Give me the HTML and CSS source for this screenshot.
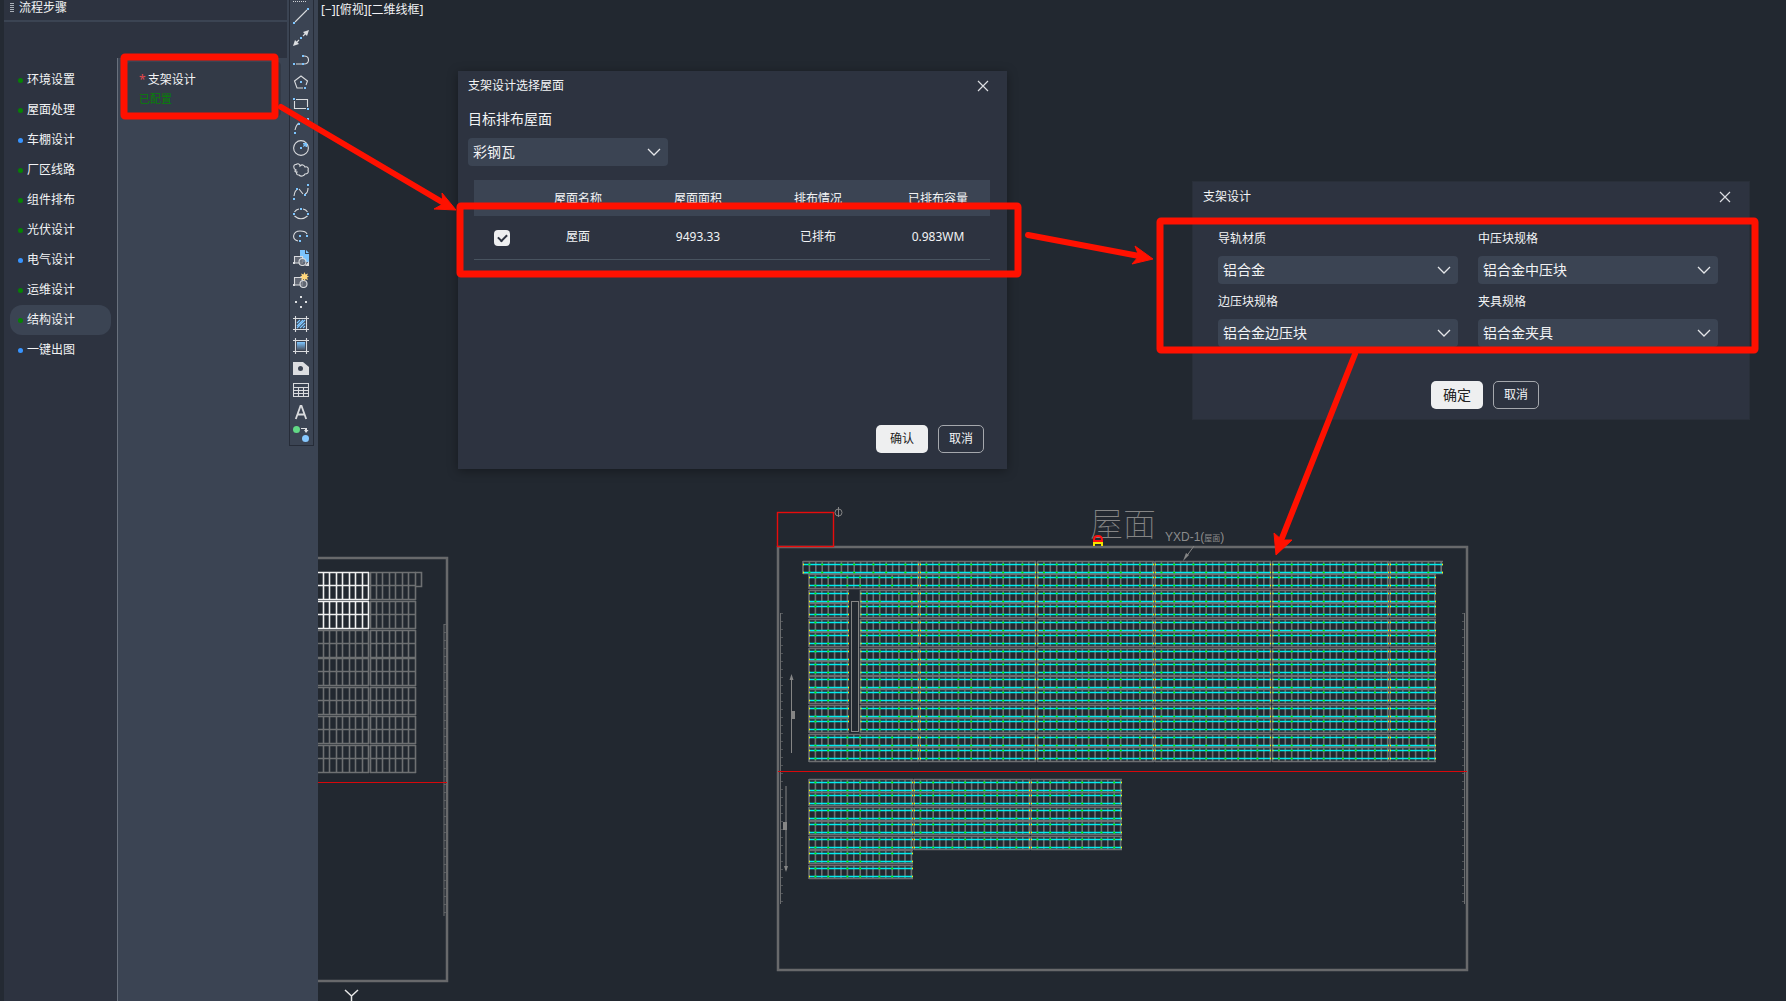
FILE: index.html
```html
<!DOCTYPE html>
<html lang="zh-CN">
<head>
<meta charset="utf-8">
<meta name="viewport" content="width=device-width, initial-scale=1">
<title>流程步骤 - 支架设计</title>
<link rel="stylesheet" href="styles.css">
</head>
<body>
<svg class="defs" aria-hidden="true">
  <symbol id="chevron" viewBox="0 0 14 10"><path d="M1 2l6 6 6-6" fill="none" stroke="#e4e6e9" stroke-width="1.3"/></symbol>
  <symbol id="close" viewBox="0 0 12 12"><path d="M1 1l10 10M11 1L1 11" fill="none" stroke="#dcdee2" stroke-width="1.2"/></symbol>
</svg>
<div class="app">
  <aside class="sidebar">
    <div class="workflow">
      <header class="workflow-head">
        <span class="grip"></span>
        <h1 class="workflow-title">流程步骤</h1>
      </header>
      <div class="workflow-body">
        <nav class="steps">
          <button class="step done">环境设置</button>
          <button class="step done">屋面处理</button>
          <button class="step">车棚设计</button>
          <button class="step done">厂区线路</button>
          <button class="step done">组件排布</button>
          <button class="step done">光伏设计</button>
          <button class="step">电气设计</button>
          <button class="step done">运维设计</button>
          <button class="step done active">结构设计</button>
          <button class="step">一键出图</button>
        </nav>
        <section class="tasks">
          <button class="task">
            <span class="task-name"><span class="required">*</span>支架设计</span>
            <span class="task-state">已配置</span>
          </button>
        </section>
      </div>
    </div>
    <div class="dock">
      <div class="toolbar">
        <button class="tool" aria-label="直线"><svg viewBox="0 0 16 16"><path d="M2 14L14 2" class="l"/><path class="b" d="M0 14h2v2H0zM14 0h2v2h-2z"/></svg></button>
        <button class="tool" aria-label="构造线"><svg viewBox="0 0 16 16"><path d="M3 13l3-3M10 6l3-3" class="l"/><path class="w" d="M16 0l-2 6-4-4zM0 16l2-6 4 4z"/><path class="b" d="M7 7h2v2H7z"/></svg></button>
        <button class="tool" aria-label="多段线"><svg viewBox="0 0 16 16"><path d="M3 12h6M11 4c6 0 6 8 0 8" class="l"/><path class="b" d="M0 11h2v2H0zM9 3h2v2H9zM9 11h2v2H9z"/></svg></button>
        <button class="tool" aria-label="多边形"><svg viewBox="0 0 16 16"><path d="M10 14H4L1.500 7 8 2l6.500 5L13 11" class="l"/><path class="b" d="M7 7h2v2H7zM11 13h2v2h-2z"/></svg></button>
        <button class="tool" aria-label="矩形"><svg viewBox="0 0 16 16"><path d="M3 3.500h11.500V11M13 12.500H1.500V5" class="l"/><path class="b" d="M0 2h2v2H0zM14 12h2v2h-2z"/></svg></button>
        <button class="tool" aria-label="圆弧"><svg viewBox="0 0 16 16"><path d="M2 12q1-5 4-7M9 3l4-2" class="l"/><path class="b" d="M1 14h2v2H1zM5 5h2v2H5zM14 0h2v2h-2z"/></svg></button>
        <button class="tool" aria-label="圆"><svg viewBox="0 0 16 16"><circle cx="8" cy="8" r="7.400" class="l"/><path class="b" d="M7 7h2v2H7zM10 3h4v4h-1.500V5.500L10.500 7 10 6l1.500-1.500H10z"/></svg></button>
        <button class="tool" aria-label="修订云线"><svg viewBox="0 0 16 16"><path d="M3 8C0 7 0 2 3 2.500 5 1 7 2 7 4c2-2 4-1 5 1 2-1 4 1 3 3 1 3-1 4-3 4-1 2-4 3-6 1-2 0-3-1-2-3-2 0-3-1-1-2z" class="l"/></svg></button>
        <button class="tool" aria-label="样条曲线"><svg viewBox="0 0 16 16"><path d="M1 12q1-6 3-6M6 5l4 5M12 10q3-1 3-6" class="l"/><path class="b" d="M0 14h2v2H0zM3 4h2v2H3zM11 10h2v2h-2zM14 0h2v2h-2z"/></svg></button>
        <button class="tool" aria-label="椭圆"><svg viewBox="0 0 16 16"><path d="M1.500 6Q3 3.500 6 3M10 3q3 .5 4.500 3M1.500 10Q8 15.500 14.500 10" class="l"/><path class="b" d="M7 2h2v2H7zM0 7h2v2H0zM14 7h2v2h-2z"/></svg></button>
        <button class="tool" aria-label="椭圆弧"><svg viewBox="0 0 16 16"><path d="M5 13C-2 11 0 3 7 3q6 0 7 3" class="l"/><path class="b" d="M6 7h2v2H6zM13 7h2v2h-2zM6 12h2v2H6z"/></svg></button>
        <button class="tool" aria-label="插入块"><svg viewBox="0 0 16 16"><path class="b" d="M7 0h5v4h4v8H7z"/><path d="M13 0l3 3h-3z" class="b"/><path d="M1.500 13V6.500h8V13z" class="l g"/><circle cx="9.500" cy="12" r="3.500" class="l g"/><path class="w" d="M0 12h2v2H0zM16 11v5h-4z"/></svg></button>
        <button class="tool" aria-label="创建块"><svg viewBox="0 0 16 16"><path d="M1.500 13V5.500h8V13z" class="l g"/><circle cx="10.500" cy="12" r="3.500" class="l g"/><path class="w" d="M0 12h2v2H0z"/><path d="M11.500 0l1 2.500L15 1.500l-1 2.300 2 .7-2 1 1 2.500-2.500-1-1 2-1-2-2.500 1 1-2.500-2-1 2-.7-1-2.300 2.500 1z" fill="#ffd67a"/></svg></button>
        <button class="tool" aria-label="点"><svg viewBox="0 0 16 16"><path class="w" d="M7 2h2v2H7zM2 7h2v2H2zM12 7h2v2h-2zM7 12h2v2H7z"/></svg></button>
        <button class="tool" aria-label="图案填充"><svg viewBox="0 0 16 16"><path d="M0 2.500h16M0 13.500h16M2.500 0v16M13.500 0v16" class="l"/><path d="M4 7l3-3M4 10l6-6M4 12l8-8M7 12l5-5M10 12l2-2" stroke="#7cc5ff" fill="none" stroke-width="1.200"/></svg></button>
        <button class="tool" aria-label="渐变色"><svg viewBox="0 0 16 16"><linearGradient id="fade" x2="0" y2="1"><stop stop-color="#7cc5ff"/><stop offset="1" stop-color="#4a5363"/></linearGradient><path fill="url(#fade)" d="M4 4h8v8H4z"/><path d="M0 2.500h16M0 13.500h16M2.500 0v16M13.500 0v16" class="l"/></svg></button>
        <button class="tool" aria-label="面域"><svg viewBox="0 0 16 16"><path class="w" fill-rule="evenodd" d="M0 2h10l6 5v8H0zM7.500 6a2.500 2.500 0 100 5 2.500 2.500 0 000-5z"/></svg></button>
        <button class="tool" aria-label="表格"><svg viewBox="0 0 16 16"><path d="M.5 1.500h15v13H.5zM0 5.500h16M0 8.500h16M0 11.500h16M5.500 5v9M10.500 5v9" class="l"/></svg></button>
        <button class="tool" aria-label="多行文字"><svg viewBox="0 0 16 16"><path d="M2.800 15L7.500 2h1l4.700 13M4.500 10.500h7" class="l t"/></svg></button>
        <button class="tool" aria-label="添加选定对象"><svg viewBox="0 0 16 16"><circle cx="3.500" cy="3.500" r="3.500" fill="#62d986"/><circle cx="12.500" cy="12.500" r="3.500" fill="#86c8ff"/><path class="w" d="M8 2h6v2h1.500L13 7l-2-3h1V3H8z"/></svg></button>
      </div>
    </div>
  </aside>

  <main class="canvas">
    <svg class="drawing" id="drawing" aria-hidden="true">
      <g transform="translate(-318 0)">
        <g id="arrays"></g>
        <g class="frame">
          <path d="M318 558H447V981H318"/>
          <rect x="778" y="547" width="689" height="423"/>
        </g>
        <g class="ruler">
          <path d="M444 624V916M780.500 613V904M1464.500 613V904"/>
          <path class="ticks" d="M445 624V916M782 613V904M1463 613V904"/>
        </g>
        <path class="axis" d="M318 782.500H447M778 771.500H1467"/>
        <rect class="axis corner" x="777.500" y="512.500" width="56" height="34"/>
        <g class="mark">
          <circle cx="838.500" cy="512.500" r="3.500"/><path d="M838.500 507v10"/>
          <rect x="851.500" y="601.500" width="7" height="130"/>
          <path d="M791.500 677v76M786 786v84"/>
          <path class="solid" d="M791.500 674l2 6h-4zM792 711h3v8h-3zM783 822h4v8h-4zM786 872l-2-6h4z"/>
          <path d="M1194 546l-8 11"/><path class="solid" d="M1183 561l3-8 3 2z"/>
        </g>
        <text class="roof-name" x="1090" y="536">屋面</text>
        <path d="M1094 541v-1q0-4 4-4t4 4v1M1093 541h10" fill="none" stroke="#f11" stroke-width="2"/>
        <path d="M1094 546v-3h8v3" fill="none" stroke="#f4e500" stroke-width="2"/>
        <text class="roof-code" x="1165" y="541">YXD-1(<tspan class="roof-small">屋面</tspan>)</text>
        <path d="M345 990l6.500 6 6.500-6M351.500 996v8" fill="none" stroke="#e6e6e6" stroke-width="1.500"/>
      </g>
    </svg>
    <div class="view-label">[−][俯视][二维线框]</div>

    <section class="dialog roof-dialog" aria-labelledby="roof-title">
      <header class="dialog-head">
        <h2 class="dialog-title" id="roof-title">支架设计选择屋面</h2>
        <button class="close" aria-label="关闭"><svg><use href="#close"/></svg></button>
      </header>
      <div class="roof-body">
        <label class="roof-label" for="roof-kind">目标排布屋面</label>
        <span class="select roof-select"><select id="roof-kind"><option>彩钢瓦</option></select><svg><use href="#chevron"/></svg></span>
        <div class="table-wrap">
          <table class="roofs">
            <thead><tr><th class="pick"></th><th>屋面名称</th><th>屋面面积</th><th>排布情况</th><th>已排布容量</th></tr></thead>
            <tbody><tr><td class="pick"><input class="check" type="checkbox" checked aria-label="选择屋面"></td><td>屋面</td><td>9493.33</td><td>已排布</td><td>0.983WM</td></tr></tbody>
          </table>
        </div>
      </div>
      <footer class="actions end">
        <button class="btn primary">确认</button>
        <button class="btn">取消</button>
      </footer>
    </section>

    <section class="dialog bracket-dialog" aria-labelledby="bracket-title">
      <header class="dialog-head">
        <h2 class="dialog-title" id="bracket-title">支架设计</h2>
        <button class="close" aria-label="关闭"><svg><use href="#close"/></svg></button>
      </header>
      <div class="fields">
        <div class="field"><label for="rail">导轨材质</label><span class="select"><select id="rail"><option>铝合金</option></select><svg><use href="#chevron"/></svg></span></div>
        <div class="field"><label for="mid">中压块规格</label><span class="select"><select id="mid"><option>铝合金中压块</option></select><svg><use href="#chevron"/></svg></span></div>
        <div class="field"><label for="edge">边压块规格</label><span class="select"><select id="edge"><option>铝合金边压块</option></select><svg><use href="#chevron"/></svg></span></div>
        <div class="field"><label for="clamp">夹具规格</label><span class="select"><select id="clamp"><option>铝合金夹具</option></select><svg><use href="#chevron"/></svg></span></div>
      </div>
      <footer class="actions center">
        <button class="btn primary large">确定</button>
        <button class="btn">取消</button>
      </footer>
    </section>
  </main>

  <svg class="guide" aria-hidden="true">
    <g class="guide-box">
      <rect x="124" y="57" width="151" height="59" rx="1"/>
      <rect x="460" y="206" width="558" height="68" rx="1"/>
      <rect x="1160" y="221" width="595" height="129" rx="1"/>
    </g>
    <g class="guide-line">
      <path d="M281 107L442 202M1028 235L1139 256M1355 354L1282 538"/>
    </g>
    <g class="guide-tip">
      <path d="M456 210l-22 -1 9 -5 -1 -11z"/>
      <path d="M1153 259l-21 5 7 -8 -4 -10z"/>
      <path d="M1276 555l-2 -22 8 7 10 0z"/>
    </g>
  </svg>
</div>
<script src="drawing.js"></script>
</body>
</html>
```
FILE: styles.css
```css
* { box-sizing: border-box; }

body {
  margin: 0;
  background: #222830;
  color: #f2f3f5;
  font: 12px/16px "Noto Sans", "Noto Sans CJK SC", sans-serif;
}

button, select, input { font: inherit; color: inherit; margin: 0; padding: 0; }
button { border: 0; background: none; }
h1, h2 { margin: 0; font-size: 12px; font-weight: 400; }

.defs { position: absolute; width: 0; height: 0; }

.app {
  position: relative;
  display: flex;
  height: 100vh;
  overflow: hidden;
}

/* Workflow panel */
.sidebar {
  flex: none;
  display: flex;
  width: 318px;
  padding-left: 4px;
  background: #242a33;
}

.workflow {
  display: flex;
  flex-direction: column;
  width: 283px;
  background: #2d3340;
}

.workflow-head {
  display: flex;
  align-items: center;
  gap: 5px;
  height: 58px;
  padding: 0 0 42px 6px;
  background: linear-gradient(#3b4453, #3b4453) 0 20px / 100% 2px no-repeat;
}

.grip {
  width: 4px;
  height: 10px;
  background: repeating-linear-gradient(#aab0b8 0 1px, transparent 1px 2px);
}

.workflow-body { display: flex; flex: 1; }

.steps {
  display: flex;
  flex-direction: column;
  width: 113px;
  padding: 7px 6px 0;
}

.step {
  display: flex;
  align-items: center;
  gap: 4px;
  height: 30px;
  padding-left: 8px;
  border-radius: 12px;
}

.step::before {
  content: "";
  width: 5px;
  height: 5px;
  border-radius: 50%;
  background: #3794ff;
}

.step.done::before { background: #068006; }
.step.active { background: #3b4453; }

.tasks {
  flex: 1;
  padding: 4px 6px 0 9px;
  border-left: 1px solid #69717d;
  background: #3b4453;
}

.task {
  display: flex;
  flex-direction: column;
  align-items: flex-start;
  gap: 3px;
  width: 100%;
  height: 54px;
  padding: 10px 12px;
  border-radius: 4px;
  background: #333a47;
}

.task-name { display: flex; gap: 2px; }
.required { color: #e5484d; }
.task-state { color: #068006; font-size: 11px; }

/* Drawing toolbar */
.dock {
  flex: 1;
  padding: 0 4px 0 2px;
  background: #3b4453;
}

.toolbar {
  display: flex;
  flex-direction: column;
  width: 25px;
  padding-top: 5px;
  border: 1px solid #262c38;
  border-top: 0;
  background: repeating-linear-gradient(90deg, #cfd2d6 0 1px, transparent 1px 2px) 3px 1px / 14px 1px no-repeat;
}

.tool {
  display: grid;
  place-items: center;
  width: 22px;
  height: 22px;
}

.tool svg { width: 16px; height: 16px; }
.tool .l { fill: none; stroke: #d9dbde; stroke-width: 1.1; }
.tool .l.g { fill: #6b717c; fill-opacity: .8; }
.tool .l.t { stroke-width: 1.8; }
.tool .w { fill: #dcdee1; }
.tool .b { fill: #7cc5ff; }

/* Drawing area */
.canvas {
  position: relative;
  flex: 1;
  overflow: hidden;
  background: #222830;
}

.drawing {
  position: absolute;
  inset: 0;
  width: 100%;
  height: 100%;
}

.view-label { position: absolute; left: 3px; top: 2px; }

.frame { fill: none; stroke: #68696b; stroke-width: 2.5; }
.ruler { fill: none; stroke: #6c6e70; }
.ticks { stroke: #808080; stroke-dasharray: 1 7; }
.axis { fill: none; stroke: #d8080b; }
.corner { stroke: #e80c0c; stroke-width: 1.4; }
.mark { fill: none; stroke: #858585; }
.mark .solid { fill: #858585; stroke: none; }
.roof-name { fill: #858585; font: 100 33px "Noto Sans CJK SC", sans-serif; }
.roof-code { fill: #8c8c8c; font: 12px "Liberation Sans", "Noto Sans CJK SC", sans-serif; }
.roof-small { font-size: 8px; }

.cells { fill: none; stroke: #6e7072; stroke-width: 1.6; }
.cells.selected { stroke: #f0f0f0; }
.rows { fill: none; stroke: #6c6d70; stroke-width: 1.5; }
.rail { fill: none; stroke: #00eded; stroke-width: 1.4; }
.joint { fill: none; stroke: #00e800; stroke-width: 1.5; }
.stop { fill: none; stroke: #fbf200; stroke-width: 1.5; }

/* Floating dialogs */
.dialog {
  position: absolute;
  display: flex;
  flex-direction: column;
  background: #2d3340;
  box-shadow: 0 2px 10px rgba(0, 0, 0, .35);
}

.roof-dialog { left: 140px; top: 71px; width: 549px; height: 398px; }
.bracket-dialog { left: 875px; top: 182px; width: 556px; height: 237px; box-shadow: none; outline: 1px solid #292f39; }

.dialog-head {
  display: flex;
  justify-content: space-between;
  align-items: center;
  height: 30px;
  padding: 0 17px 0 10px;
}

.close { display: grid; place-items: center; width: 14px; height: 14px; }
.close svg { width: 12px; height: 12px; }

.roof-body { display: flex; flex-direction: column; padding: 8px 16px 0 10px; }
.roof-label { font-size: 14px; line-height: 20px; }
.roof-select { width: 200px; margin-top: 9px; }

.select { position: relative; display: block; }

.select select {
  appearance: none;
  width: 100%;
  height: 28px;
  padding: 0 5px;
  border: 0;
  border-radius: 4px;
  background: #3b4453;
  font-size: 14px;
  display: block;
}

.select svg {
  position: absolute;
  right: 7px;
  top: 9px;
  width: 14px;
  height: 10px;
  pointer-events: none;
}

.table-wrap { overflow: hidden; margin: 14px 1px 0 6px; }

.roofs {
  width: 524px;
  table-layout: fixed;
  border-collapse: collapse;
  text-align: center;
}

.roofs th { height: 36px; padding: 2px 0 0; background: #3b4453; font-weight: 400; }
.roofs td { height: 43px; padding: 0; border-bottom: 1px solid #48535f; }
.roofs .pick { width: 44px; padding-left: 12px; }

.check {
  appearance: none;
  display: grid;
  place-items: center;
  width: 16px;
  height: 16px;
  margin: 2px auto 0;
  border-radius: 4px;
  background: #eeeff0;
}

.check:checked::before {
  content: "";
  width: 7px;
  height: 4px;
  margin-top: -2px;
  border: solid #2d3340;
  border-width: 0 0 2px 2px;
  transform: rotate(-45deg);
}

.actions { display: flex; gap: 10px; margin-top: auto; }
.end { justify-content: flex-end; padding: 0 23px 16px 0; }
.center { justify-content: center; padding: 0 0 10px 28px; }

.btn {
  width: 46px;
  height: 28px;
  border: 1px solid #a5a8ad;
  border-radius: 5px;
}

.btn.primary { width: 52px; border: 0; background: #eeeff0; color: #222; }
.btn.large { font-size: 14px; }

.fields {
  display: grid;
  grid-template-columns: 1fr 1fr;
  gap: 10px 20px;
  padding: 19px 31px 0 25px;
}

.field { display: flex; flex-direction: column; gap: 9px; }
.field label { line-height: 16px; }

/* Tutorial annotations */
.guide {
  position: absolute;
  inset: 0;
  width: 100%;
  height: 100%;
  pointer-events: none;
}

.guide-box { fill: none; stroke: #ff1100; stroke-width: 7; stroke-linejoin: round; }
.guide-line { fill: none; stroke: #ff1100; stroke-width: 6; stroke-linecap: round; }
.guide-tip { fill: #ff1100; stroke: #ff1100; }
```
FILE: drawing.js
```js
// Draws the photovoltaic module arrays of the plan.
const host = document.getElementById("arrays");
const MODULE = 6.4;

function add(cls, d) {
  const p = document.createElementNS("http://www.w3.org/2000/svg", "path");
  p.setAttribute("class", cls);
  p.setAttribute("d", d);
  host.appendChild(p);
}

// One row of one block: module cells, two rails, joints and end clamps.
function block(x1, x2, top, rails, height) {
  let cells = "", rail = "", joint = "", stop = "";
  for (let x = x1; x < x2 + 1; x += MODULE) cells += `M${x} ${top}v${height}`;
  add("rows", `M${x1} ${top + .5}H${x2}M${x1} ${top + height - .5}H${x2}`);
  add("cells", cells);
  for (const y of rails) {
    rail += `M${x1} ${y + .5}H${x2}`;
    stop += `M${x1} ${y + .5}h1M${x2 - 1} ${y + .5}h1`;
    for (const k of [1, 3, 6, 8, 11, 13, 16]) {
      const x = x1 + k * MODULE;
      if (x < x2 - 3) joint += `M${x - 1} ${y + .5}h2`;
    }
  }
  add("rail", rail);
  add("joint", joint);
  add("stop", stop);
}

const upper = [564, 577, 593, 606, 622, 635, 651, 664, 679, 692, 708, 721, 737, 750];
upper.forEach((y, i) => {
  const cuts = [[i ? 809 : 803, 919], [920, 1036], [1037.500, 1154], [1155, 1271], [1272.500, 1389], [1390, i ? 1436 : 1443]];
  if (i > 1 && i < 12) cuts.splice(0, 1, [809, 849], [860.500, 919]);
  for (const [a, b] of cuts) block(a, b, y - 3, [y, y + 8], i % 2 ? 15 : 13);
});

const lower = [782, 795, 810, 824, 839, 853, 868];
lower.forEach((y, i) => {
  const cuts = i < 5 ? [[809, 913], [914, 1030], [1031, 1122]] : [[809, 913]];
  for (const [a, b] of cuts) block(a, b, y - 3, [y, y + 8], 14);
});

// Modules of the neighbouring roof, not yet fitted with rails.
const xsLeft = [323, 329, 336, 342, 349, 355, 362, 368];
const xsRight = [370, 376, 382, 389, 395, 402, 408, 415];
for (let i = 6; i >= 0; i--) {
  const y = Math.round(572 + i * 28.800);
  const rows = (a, b) => `M${a} ${y + .5}H${b}M${a} ${y + 13.500}H${b}M${a} ${y + 27.500}H${b}`;
  const cols = xs => xs.map(x => `M${x + .5} ${y}v28`).join("");
  add(i < 2 ? "cells selected" : "cells", rows(318, 369) + cols(xsLeft));
  add("cells", rows(370, 416) + cols(xsRight));
}
add("cells", "M415 572.500H421.500V586.500H415");
```
